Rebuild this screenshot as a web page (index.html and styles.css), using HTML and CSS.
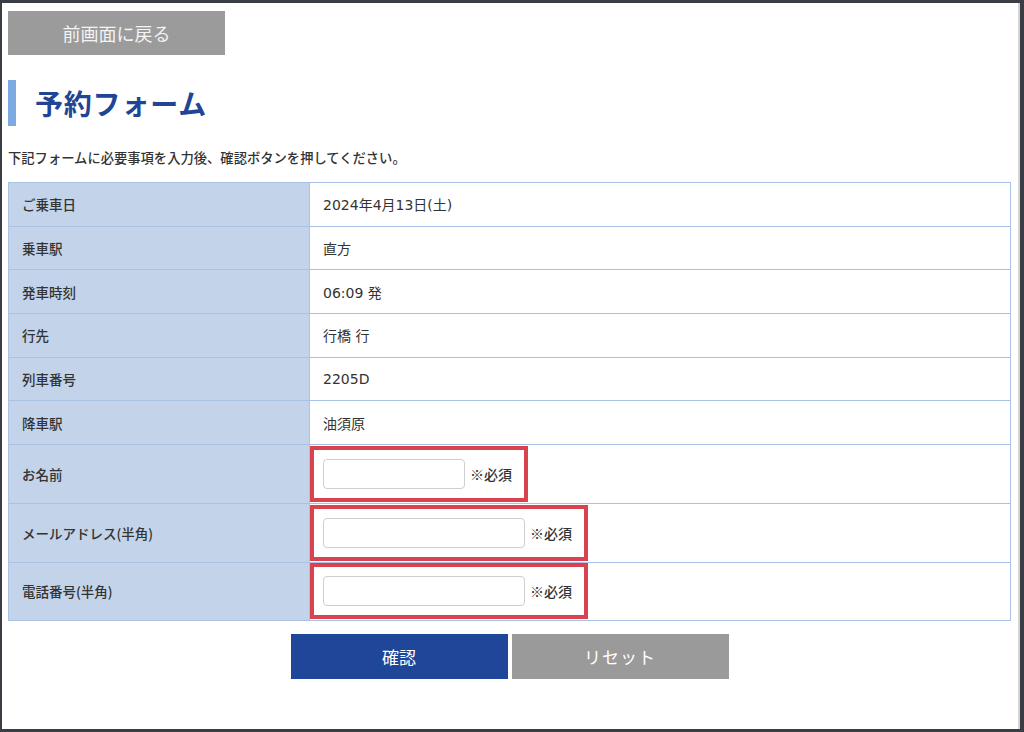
FILE: index.html
```html
<!DOCTYPE html>
<html lang="ja">
<head>
  <meta charset="UTF-8">
  <title>予約フォーム</title>
  <link rel="stylesheet" href="styles.css">
</head>
<body>
  <div class="frame">
    <!-- Back button -->
    <a class="back-btn" href="#">前画面に戻る</a>

    <h1 class="title">予約フォーム</h1>

    <p class="lead">下記フォームに必要事項を入力後、確認ボタンを押してください。</p>

    <form class="reserve">
      <table class="form-table">
        <tr><th>ご乗車日</th><td>2024年4月13日(土)</td></tr>
        <tr><th>乗車駅</th><td>直方</td></tr>
        <tr><th>発車時刻</th><td>06:09 発</td></tr>
        <tr><th>行先</th><td>行橋 行</td></tr>
        <tr><th>列車番号</th><td>2205D</td></tr>
        <tr><th>降車駅</th><td>油須原</td></tr>
        <tr class="input-row">
          <th>お名前</th>
          <td><div class="req"><input type="text" class="short"><span>※必須</span></div></td>
        </tr>
        <tr class="input-row">
          <th>メールアドレス(半角)</th>
          <td><div class="req"><input type="text"><span>※必須</span></div></td>
        </tr>
        <tr class="input-row">
          <th>電話番号(半角)</th>
          <td><div class="req"><input type="text"><span>※必須</span></div></td>
        </tr>
      </table>

      <div class="actions">
        <button type="button" class="btn btn-primary">確認</button>
        <button type="reset" class="btn btn-gray">リセット</button>
      </div>
    </form>
  </div>
</body>
</html>
```

FILE: styles.css
```css
/* Reset */
* {
  margin: 0;
  padding: 0;
  box-sizing: border-box;
}

body {
  font-family: "DejaVu Sans", "Noto Sans CJK JP", sans-serif;
  color: #333;
  background: #fff;
}

/* screenshot window frame */
.frame {
  height: 732px;
  border-top: 3px solid #3a3d43;
  border-left: 2px solid #3a3d43;
  border-right: 4px solid #3a3d43;
  border-bottom: 3px solid #3a3d43;
  box-shadow: inset -2px 0 0 #d4d4d4;
  padding: 8px 9px 0 6px;
}

/* Back button */
.back-btn {
  display: flex;
  justify-content: center;
  align-items: center;
  width: 217px;
  height: 44px;
  background: #9b9b9b;
  color: #f4f4f4;
  font-family: "Noto Sans CJK JP", sans-serif;
  font-size: 18px;
  text-decoration: none;
}

/* Heading */
.title {
  margin-top: 25px;
  height: 46px;
  display: flex;
  align-items: center;
  border-left: 8px solid #7eaae3;
  padding-left: 19px;
  font-family: "Noto Sans CJK JP", sans-serif;
  font-size: 28px;
  font-weight: 700;
  color: #1f4594;
  letter-spacing: 0.8px;
}

.lead {
  margin-top: 22px;
  font-family: "Noto Sans CJK JP", sans-serif;
  font-size: 13.3px;
  font-weight: 500;
  line-height: 20px;
}

/* Table */
.form-table {
  margin-top: 14px;
  width: 100%;
  border-collapse: collapse;
  font-size: 14px;
}

.form-table th,
.form-table td {
  border: 1px solid #a9c1e5;
  height: 43.7px;
  text-align: left;
  vertical-align: middle;
}

.form-table th {
  width: 301px;
  background: #c2d3ea;
  font-family: "Noto Sans CJK JP", sans-serif;
  font-size: 13.5px;
  font-weight: 500;
  padding-left: 13px;
}

.form-table td {
  padding-left: 13px;
}

.form-table .input-row th,
.form-table .input-row td {
  height: 58.7px;
}

.form-table .input-row td {
  padding: 0;
}

/* red highlight around required inputs */
.req {
  display: inline-flex;
  align-items: center;
  gap: 5px;
  border: 4px solid #d9434f;
  padding: 9px 12px 9px 9px;
}

.req input {
  width: 202px;
  height: 30px;
  border: 1px solid #cfcfcf;
  border-radius: 4px;
  background: #fff;
}

.req input.short {
  width: 142px;
}

.req span {
  font-family: "Noto Sans CJK JP", sans-serif;
  font-size: 14px;
  font-weight: 500;
}

/* Buttons */
.actions {
  display: flex;
  justify-content: center;
  gap: 4px;
  margin-top: 13px;
}

.btn {
  width: 217px;
  height: 45px;
  border: none;
  color: #fff;
  font-family: "Noto Sans CJK JP", sans-serif;
  font-size: 17px;
  cursor: pointer;
}

.btn-primary {
  background: #1f4698;
}

.btn-gray {
  background: #9a9a9a;
  letter-spacing: 1px;
}
```
